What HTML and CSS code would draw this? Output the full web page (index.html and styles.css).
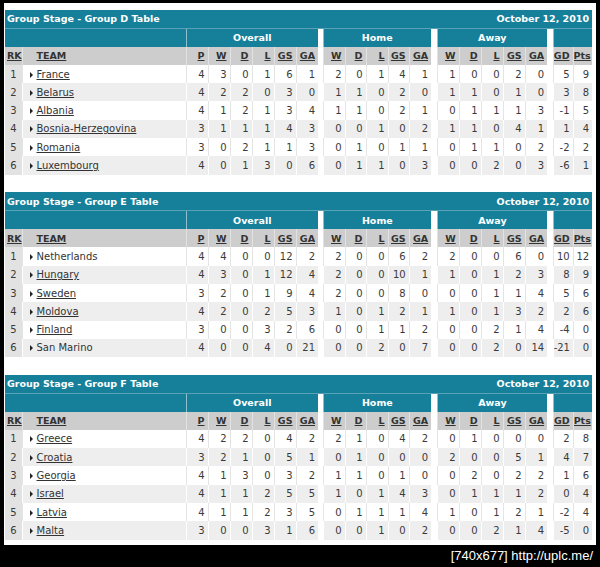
FILE: index.html
```html
<!DOCTYPE html>
<html>
<head>
<meta charset="utf-8">
<link rel="stylesheet" href="styles.css">
</head>
<body>
<div class="frame">

<table class="group">
<colgroup><col class="c-rk"><col class="c-team"><col class="c-n"><col class="c-n"><col class="c-n"><col class="c-n"><col class="c-n"><col class="c-n"><col class="c-gap"><col class="c-h"><col class="c-h2"><col class="c-h"><col class="c-h2"><col class="c-h"><col class="c-gap2"><col class="c-n"><col class="c-n"><col class="c-n"><col class="c-n"><col class="c-n"><col class="c-gap2"><col class="c-gd"><col class="c-pts"></colgroup>
<tr class="title"><td colspan="12" class="t-left">Group Stage - Group D Table</td><td colspan="11" class="t-right">October 12, 2010</td></tr>
<tr class="sect"><td colspan="2"></td><td colspan="6" class="sec">Overall</td><td class="gap"></td><td colspan="5" class="sec">Home</td><td class="gap"></td><td colspan="5" class="sec">Away</td><td class="gap"></td><td colspan="2" class="sec"></td></tr>
<tr class="hdr"><th class="rk-h"><u>RK</u></th><th class="team-h"><u>TEAM</u></th><th><u>P</u></th><th><u>W</u></th><th><u>D</u></th><th><u>L</u></th><th><u>GS</u></th><th><u>GA</u></th><th class="gap"></th><th><u>W</u></th><th><u>D</u></th><th><u>L</u></th><th><u>GS</u></th><th><u>GA</u></th><th class="gap"></th><th><u>W</u></th><th><u>D</u></th><th><u>L</u></th><th><u>GS</u></th><th><u>GA</u></th><th class="gap"></th><th><u>GD</u></th><th><u>Pts</u></th></tr>
<tr class="r"><td class="rk">1</td><td class="team"><i class="tri"></i><span class="lnk">France</span></td><td>4</td><td>3</td><td>0</td><td>1</td><td>6</td><td>1</td><td class="gap"></td><td>2</td><td>0</td><td>1</td><td>4</td><td>1</td><td class="gap"></td><td>1</td><td>0</td><td>0</td><td>2</td><td>0</td><td class="gap"></td><td>5</td><td>9</td></tr>
<tr class="r alt"><td class="rk">2</td><td class="team"><i class="tri"></i><span class="lnk">Belarus</span></td><td>4</td><td>2</td><td>2</td><td>0</td><td>3</td><td>0</td><td class="gap"></td><td>1</td><td>1</td><td>0</td><td>2</td><td>0</td><td class="gap"></td><td>1</td><td>1</td><td>0</td><td>1</td><td>0</td><td class="gap"></td><td>3</td><td>8</td></tr>
<tr class="r"><td class="rk">3</td><td class="team"><i class="tri"></i><span class="lnk">Albania</span></td><td>4</td><td>1</td><td>2</td><td>1</td><td>3</td><td>4</td><td class="gap"></td><td>1</td><td>1</td><td>0</td><td>2</td><td>1</td><td class="gap"></td><td>0</td><td>1</td><td>1</td><td>1</td><td>3</td><td class="gap"></td><td>-1</td><td>5</td></tr>
<tr class="r alt"><td class="rk">4</td><td class="team"><i class="tri"></i><span class="lnk">Bosnia-Herzegovina</span></td><td>3</td><td>1</td><td>1</td><td>1</td><td>4</td><td>3</td><td class="gap"></td><td>0</td><td>0</td><td>1</td><td>0</td><td>2</td><td class="gap"></td><td>1</td><td>1</td><td>0</td><td>4</td><td>1</td><td class="gap"></td><td>1</td><td>4</td></tr>
<tr class="r"><td class="rk">5</td><td class="team"><i class="tri"></i><span class="lnk">Romania</span></td><td>3</td><td>0</td><td>2</td><td>1</td><td>1</td><td>3</td><td class="gap"></td><td>0</td><td>1</td><td>0</td><td>1</td><td>1</td><td class="gap"></td><td>0</td><td>1</td><td>1</td><td>0</td><td>2</td><td class="gap"></td><td>-2</td><td>2</td></tr>
<tr class="r alt"><td class="rk">6</td><td class="team"><i class="tri"></i><span class="lnk">Luxembourg</span></td><td>4</td><td>0</td><td>1</td><td>3</td><td>0</td><td>6</td><td class="gap"></td><td>0</td><td>1</td><td>1</td><td>0</td><td>3</td><td class="gap"></td><td>0</td><td>0</td><td>2</td><td>0</td><td>3</td><td class="gap"></td><td>-6</td><td>1</td></tr>
</table>

<table class="group">
<colgroup><col class="c-rk"><col class="c-team"><col class="c-n"><col class="c-n"><col class="c-n"><col class="c-n"><col class="c-n"><col class="c-n"><col class="c-gap"><col class="c-h"><col class="c-h2"><col class="c-h"><col class="c-h2"><col class="c-h"><col class="c-gap2"><col class="c-n"><col class="c-n"><col class="c-n"><col class="c-n"><col class="c-n"><col class="c-gap2"><col class="c-gd"><col class="c-pts"></colgroup>
<tr class="title"><td colspan="12" class="t-left">Group Stage - Group E Table</td><td colspan="11" class="t-right">October 12, 2010</td></tr>
<tr class="sect"><td colspan="2"></td><td colspan="6" class="sec">Overall</td><td class="gap"></td><td colspan="5" class="sec">Home</td><td class="gap"></td><td colspan="5" class="sec">Away</td><td class="gap"></td><td colspan="2" class="sec"></td></tr>
<tr class="hdr"><th class="rk-h"><u>RK</u></th><th class="team-h"><u>TEAM</u></th><th><u>P</u></th><th><u>W</u></th><th><u>D</u></th><th><u>L</u></th><th><u>GS</u></th><th><u>GA</u></th><th class="gap"></th><th><u>W</u></th><th><u>D</u></th><th><u>L</u></th><th><u>GS</u></th><th><u>GA</u></th><th class="gap"></th><th><u>W</u></th><th><u>D</u></th><th><u>L</u></th><th><u>GS</u></th><th><u>GA</u></th><th class="gap"></th><th><u>GD</u></th><th><u>Pts</u></th></tr>
<tr class="r"><td class="rk">1</td><td class="team"><i class="tri"></i><span>Netherlands</span></td><td>4</td><td>4</td><td>0</td><td>0</td><td>12</td><td>2</td><td class="gap"></td><td>2</td><td>0</td><td>0</td><td>6</td><td>2</td><td class="gap"></td><td>2</td><td>0</td><td>0</td><td>6</td><td>0</td><td class="gap"></td><td>10</td><td>12</td></tr>
<tr class="r alt"><td class="rk">2</td><td class="team"><i class="tri"></i><span class="lnk">Hungary</span></td><td>4</td><td>3</td><td>0</td><td>1</td><td>12</td><td>4</td><td class="gap"></td><td>2</td><td>0</td><td>0</td><td>10</td><td>1</td><td class="gap"></td><td>1</td><td>0</td><td>1</td><td>2</td><td>3</td><td class="gap"></td><td>8</td><td>9</td></tr>
<tr class="r"><td class="rk">3</td><td class="team"><i class="tri"></i><span class="lnk">Sweden</span></td><td>3</td><td>2</td><td>0</td><td>1</td><td>9</td><td>4</td><td class="gap"></td><td>2</td><td>0</td><td>0</td><td>8</td><td>0</td><td class="gap"></td><td>0</td><td>0</td><td>1</td><td>1</td><td>4</td><td class="gap"></td><td>5</td><td>6</td></tr>
<tr class="r alt"><td class="rk">4</td><td class="team"><i class="tri"></i><span class="lnk">Moldova</span></td><td>4</td><td>2</td><td>0</td><td>2</td><td>5</td><td>3</td><td class="gap"></td><td>1</td><td>0</td><td>1</td><td>2</td><td>1</td><td class="gap"></td><td>1</td><td>0</td><td>1</td><td>3</td><td>2</td><td class="gap"></td><td>2</td><td>6</td></tr>
<tr class="r"><td class="rk">5</td><td class="team"><i class="tri"></i><span class="lnk">Finland</span></td><td>3</td><td>0</td><td>0</td><td>3</td><td>2</td><td>6</td><td class="gap"></td><td>0</td><td>0</td><td>1</td><td>1</td><td>2</td><td class="gap"></td><td>0</td><td>0</td><td>2</td><td>1</td><td>4</td><td class="gap"></td><td>-4</td><td>0</td></tr>
<tr class="r alt"><td class="rk">6</td><td class="team"><i class="tri"></i><span>San Marino</span></td><td>4</td><td>0</td><td>0</td><td>4</td><td>0</td><td>21</td><td class="gap"></td><td>0</td><td>0</td><td>2</td><td>0</td><td>7</td><td class="gap"></td><td>0</td><td>0</td><td>2</td><td>0</td><td>14</td><td class="gap"></td><td>-21</td><td>0</td></tr>
</table>

<table class="group">
<colgroup><col class="c-rk"><col class="c-team"><col class="c-n"><col class="c-n"><col class="c-n"><col class="c-n"><col class="c-n"><col class="c-n"><col class="c-gap"><col class="c-h"><col class="c-h2"><col class="c-h"><col class="c-h2"><col class="c-h"><col class="c-gap2"><col class="c-n"><col class="c-n"><col class="c-n"><col class="c-n"><col class="c-n"><col class="c-gap2"><col class="c-gd"><col class="c-pts"></colgroup>
<tr class="title"><td colspan="12" class="t-left">Group Stage - Group F Table</td><td colspan="11" class="t-right">October 12, 2010</td></tr>
<tr class="sect"><td colspan="2"></td><td colspan="6" class="sec">Overall</td><td class="gap"></td><td colspan="5" class="sec">Home</td><td class="gap"></td><td colspan="5" class="sec">Away</td><td class="gap"></td><td colspan="2" class="sec"></td></tr>
<tr class="hdr"><th class="rk-h"><u>RK</u></th><th class="team-h"><u>TEAM</u></th><th><u>P</u></th><th><u>W</u></th><th><u>D</u></th><th><u>L</u></th><th><u>GS</u></th><th><u>GA</u></th><th class="gap"></th><th><u>W</u></th><th><u>D</u></th><th><u>L</u></th><th><u>GS</u></th><th><u>GA</u></th><th class="gap"></th><th><u>W</u></th><th><u>D</u></th><th><u>L</u></th><th><u>GS</u></th><th><u>GA</u></th><th class="gap"></th><th><u>GD</u></th><th><u>Pts</u></th></tr>
<tr class="r"><td class="rk">1</td><td class="team"><i class="tri"></i><span class="lnk">Greece</span></td><td>4</td><td>2</td><td>2</td><td>0</td><td>4</td><td>2</td><td class="gap"></td><td>2</td><td>1</td><td>0</td><td>4</td><td>2</td><td class="gap"></td><td>0</td><td>1</td><td>0</td><td>0</td><td>0</td><td class="gap"></td><td>2</td><td>8</td></tr>
<tr class="r alt"><td class="rk">2</td><td class="team"><i class="tri"></i><span class="lnk">Croatia</span></td><td>3</td><td>2</td><td>1</td><td>0</td><td>5</td><td>1</td><td class="gap"></td><td>0</td><td>1</td><td>0</td><td>0</td><td>0</td><td class="gap"></td><td>2</td><td>0</td><td>0</td><td>5</td><td>1</td><td class="gap"></td><td>4</td><td>7</td></tr>
<tr class="r"><td class="rk">3</td><td class="team"><i class="tri"></i><span class="lnk">Georgia</span></td><td>4</td><td>1</td><td>3</td><td>0</td><td>3</td><td>2</td><td class="gap"></td><td>1</td><td>1</td><td>0</td><td>1</td><td>0</td><td class="gap"></td><td>0</td><td>2</td><td>0</td><td>2</td><td>2</td><td class="gap"></td><td>1</td><td>6</td></tr>
<tr class="r alt"><td class="rk">4</td><td class="team"><i class="tri"></i><span class="lnk">Israel</span></td><td>4</td><td>1</td><td>1</td><td>2</td><td>5</td><td>5</td><td class="gap"></td><td>1</td><td>0</td><td>1</td><td>4</td><td>3</td><td class="gap"></td><td>0</td><td>1</td><td>1</td><td>1</td><td>2</td><td class="gap"></td><td>0</td><td>4</td></tr>
<tr class="r"><td class="rk">5</td><td class="team"><i class="tri"></i><span class="lnk">Latvia</span></td><td>4</td><td>1</td><td>1</td><td>2</td><td>3</td><td>5</td><td class="gap"></td><td>0</td><td>1</td><td>1</td><td>1</td><td>4</td><td class="gap"></td><td>1</td><td>0</td><td>1</td><td>2</td><td>1</td><td class="gap"></td><td>-2</td><td>4</td></tr>
<tr class="r alt"><td class="rk">6</td><td class="team"><i class="tri"></i><span class="lnk">Malta</span></td><td>3</td><td>0</td><td>0</td><td>3</td><td>1</td><td>6</td><td class="gap"></td><td>0</td><td>0</td><td>1</td><td>0</td><td>2</td><td class="gap"></td><td>0</td><td>0</td><td>2</td><td>1</td><td>4</td><td class="gap"></td><td>-5</td><td>0</td></tr>
</table>

</div>
<div class="mark">[740x677] http://uplc.me/</div>
</body>
</html>
```

FILE: styles.css
```css
html, body {
  margin: 0;
  padding: 0;
  background: #000;
}
body {
  width: 600px;
  height: 567px;
  overflow: hidden;
  font-family: "DejaVu Sans", Verdana, sans-serif;
}
.frame {
  margin: 3px 4px 0 4px;
  width: 592px;
  height: 542px;
  box-sizing: border-box;
  padding: 7px 4px 0 1px;
  background: #fff;
  overflow: hidden;
}
.group {
  width: 587px;
  table-layout: fixed;
  border-collapse: collapse;
  border-spacing: 0;
  margin-bottom: 17.8px;
  font-size: 10px;
  color: #3a3a3a;
}
.c-rk { width: 17px; }
.c-team { width: 164px; }
.c-n { width: 22px; }
.c-gap { width: 5px; }
.c-gap2 { width: 6px; }
.c-h { width: 22px; }
.c-h2 { width: 21px; }
.c-gd { width: 20px; }
.c-pts { width: 19px; }

.group td, .group th {
  padding: 1px 3px 0 0;
  height: 18.3px;
  line-height: 12px;
  text-align: right;
  white-space: nowrap;
  overflow: hidden;
  box-sizing: border-box;
}

/* title row */
.title td {
  background: #16809a;
  color: #fff;
  font-weight: bold;
  font-size: 9.5px;
  border-bottom: 1px solid #5aa3b6;
}
.title .t-left { text-align: left; padding-left: 2px; }
.title .t-right { text-align: right; padding-right: 3px; }

/* section row */
.sect td {
  background: #16809a;
  color: #fff;
  font-weight: bold;
  font-size: 9.5px;
}
.sect td.sec {
  text-align: center;
  padding-right: 0;
  border-left: 1px solid #8fc0cd;
}
.sect td.gap { background: #fff; }

/* column header row */
.hdr th {
  background: #cdcdcd;
  color: #333;
  font-weight: bold;
  font-size: 9.5px;
  border-left: 1px solid #e2e2e2;
}
.hdr th.gap { background: #fff; border-left: 0; }
.hdr th.rk-h { text-align: left; padding-left: 2px; border-left: 0; }
.hdr th.team-h { text-align: left; padding-left: 14px; }

/* data rows */
.r td {
  background: #fff;
  border-left: 1px solid #e4e4e4;
}
.r.alt td {
  background: #eeeeee;
  border-left-color: #fff;
}
.r td.gap {
  background: #fff;
  border-left: 0;
}
.r td.rk {
  background: #e2e2e2;
  padding-right: 5px;
  border-left: 0;
}
.r td.team {
  text-align: left;
  padding-left: 7px;
  color: #333;
}
.tri {
  display: inline-block;
  width: 0;
  height: 0;
  border-left: 3px solid #222;
  border-top: 3px solid transparent;
  border-bottom: 3px solid transparent;
  margin-right: 4px;
  vertical-align: 0;
}
.lnk { text-decoration: underline; }

.mark {
  height: 22px;
  color: #fff;
  text-align: right;
  padding-right: 7px;
  font-family: "Liberation Sans Narrow", "Liberation Sans", sans-serif;
  font-size: 13px;
  line-height: 22px;
}
```
